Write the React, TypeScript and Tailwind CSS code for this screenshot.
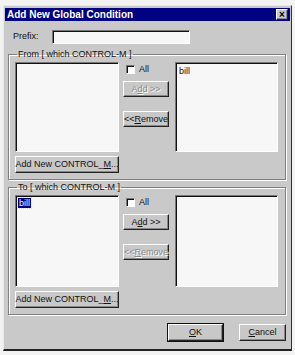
import React from 'react';

const raised =
  'border border-t-white border-l-white border-r-[#222] border-b-[#222] shadow-[inset_-1px_-1px_0_#888]';
const sunken =
  'border border-t-[#777] border-l-[#777] border-r-white border-b-white shadow-[inset_1px_1px_0_#111]';

interface BtnProps {
  children: React.ReactNode;
  className?: string;
  disabled?: boolean;
  isDefault?: boolean;
}

const Btn: React.FC<BtnProps> = ({ children, className = '', disabled, isDefault }) => (
  <div
    className={`${raised} ${isDefault ? 'outline outline-1 outline-[#111]' : ''} bg-[#c8c8c8] flex items-center justify-center text-[9px] leading-none ${
      disabled ? 'text-[#8a8a8a] [text-shadow:1px_1px_0_#fff]' : 'text-[#111]'
    } ${className}`}
  >
    <span className="whitespace-nowrap">{children}</span>
  </div>
);

const CheckAll: React.FC = () => (
  <div className="flex items-center gap-[4px] text-[9px] leading-none text-[#111]">
    <div className={`${sunken} w-[9px] h-[9px] bg-white`} />
    <span>All</span>
  </div>
);

interface GroupProps {
  legend: string;
  leftItem?: React.ReactNode;
  rightItem?: React.ReactNode;
  addDisabled?: boolean;
  removeDisabled?: boolean;
  className?: string;
  listH: string;
}

const Group: React.FC<GroupProps> = ({ legend, leftItem, rightItem, addDisabled, removeDisabled, className = '', listH }) => (
  <fieldset
    className={`ml-[3px] w-[278px] border border-[#808080] shadow-[inset_1px_1px_0_#fff,1px_1px_0_#fff] px-[6px] pb-[6px] ${className}`}
  >
    <legend className="ml-[2px] px-[1px] text-[9px] leading-[10px] text-[#111]">{legend}</legend>
    <div className="flex mt-[3px]">
      <div className="flex flex-col">
        <div className={`${sunken} w-[104px] ${listH} bg-[#f7f7f7] p-[2px] text-[9px] leading-[10px]`}>{leftItem}</div>
        <Btn className="mt-[4px] w-[104px] h-[17px]">
          Add New CONTROL_<span className="underline">M</span>...
        </Btn>
      </div>
      <div className="flex flex-col ml-[4px] w-[46px] pt-[3px]">
        <div className="pl-[3px]">
          <CheckAll />
        </div>
        <Btn className="mt-[7px] w-[46px] h-[16px]" disabled={addDisabled}>
          A<span className="underline">d</span>d &gt;&gt;
        </Btn>
        <Btn className="mt-[14px] w-[46px] h-[16px]" disabled={removeDisabled}>
          &lt;&lt;<span className="underline">R</span>emove
        </Btn>
      </div>
      <div className={`${sunken} ml-[6px] w-[103px] ${listH} bg-[#f7f7f7] p-[3px] text-[9px] leading-[10px] text-[#111]`}>
        {rightItem}
      </div>
    </div>
  </fieldset>
);

export default function App() {
  return (
    <div className="w-[295px] h-[355px] bg-[#f3f3f3] pt-[5px] pl-[3px] font-['Liberation_Sans',Arial,sans-serif]">
      <div className="w-[289px] h-[346px] bg-[#c9c9c9] border border-t-[#e8e8e8] border-l-[#e8e8e8] border-r-[#333] border-b-[#222] border-b-2 p-[1px] flex flex-col">
        <div className="h-[13px] mt-[1px] bg-[#000080] flex items-center justify-between pl-[2px] pr-[2px]">
          <span className="text-white font-bold text-[10px] leading-none">Add New Global Condition</span>
          <div className={`${raised} bg-[#c9c9c9] w-[12px] h-[11px] flex items-center justify-center text-[10px] leading-none text-black font-bold`}>
            ×
          </div>
        </div>

        <div className="flex items-center mt-[9px] h-[13px]">
          <span className="ml-[8px] text-[9px] leading-none text-[#111] w-[39px]">Prefix:</span>
          <div className={`${sunken} w-[138px] h-[14px] bg-[#f7f7f7]`} />
        </div>

        <Group
          legend="From  [ which CONTROL-M ]"
          className="mt-[6px]"
          listH="h-[90px]"
          addDisabled
          rightItem={<span className="text-[#111]">bill</span>}
        />

        <Group
          legend="To  [ which CONTROL-M ]"
          className="mt-[2px]"
          listH="h-[92px]"
          removeDisabled
          leftItem={
            <span className="inline-block bg-[#000080] text-white outline outline-1 outline-dotted outline-[#ddd] px-[1px]">
              bill
            </span>
          }
        />

        <div className="flex justify-end mt-[9px] pr-[4px] gap-[16px]">
          <Btn className="w-[55px] h-[17px]" isDefault>
            <span className="underline">O</span>K
          </Btn>
          <Btn className="w-[47px] h-[17px]">
            <span className="underline">C</span>ancel
          </Btn>
        </div>
      </div>
    </div>
  );
}
